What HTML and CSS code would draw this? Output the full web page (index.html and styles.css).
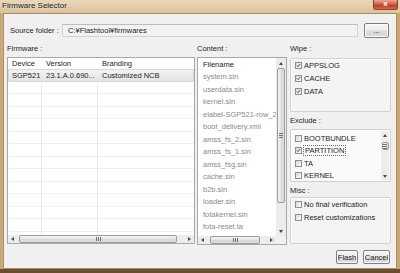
FILE: index.html
```html
<!DOCTYPE html>
<html lang="en">
<head>
<meta charset="UTF-8">
<title>Firmware Selector</title>
<link rel="stylesheet" href="styles.css">
</head>
<body>

<div class="window">
  <div class="titlebar">
    <span class="title">Firmware Selector</span>
    <span class="close-btn">x</span>
  </div>

  <div class="client">
    <div class="source-row">
      <span class="source-label">Source folder :</span>
      <div class="path-field">C:¥Flashtool¥firmwares</div>
      <button class="btn browse-btn">...</button>
    </div>

    <div class="panes">
      <!-- firmware table -->
      <div class="pane">
        <div class="caption">Firmware :</div>
        <div class="fw-table">
          <div class="fw-head"><span class="c1">Device</span><span class="c2">Version</span><span class="c3">Branding</span></div>
          <div class="fw-body">
            <div class="fw-row selected"><span class="c1">SGP521</span><span class="c2">23.1.A.0.690...</span><span class="c3">Customized NCB</span></div>
            <div class="fw-row"><span class="c1"></span><span class="c2"></span><span class="c3"></span></div>
            <div class="fw-row"><span class="c1"></span><span class="c2"></span><span class="c3"></span></div>
            <div class="fw-row"><span class="c1"></span><span class="c2"></span><span class="c3"></span></div>
            <div class="fw-row"><span class="c1"></span><span class="c2"></span><span class="c3"></span></div>
            <div class="fw-row"><span class="c1"></span><span class="c2"></span><span class="c3"></span></div>
            <div class="fw-row"><span class="c1"></span><span class="c2"></span><span class="c3"></span></div>
            <div class="fw-row"><span class="c1"></span><span class="c2"></span><span class="c3"></span></div>
            <div class="fw-row"><span class="c1"></span><span class="c2"></span><span class="c3"></span></div>
            <div class="fw-row"><span class="c1"></span><span class="c2"></span><span class="c3"></span></div>
            <div class="fw-row"><span class="c1"></span><span class="c2"></span><span class="c3"></span></div>
            <div class="fw-row"><span class="c1"></span><span class="c2"></span><span class="c3"></span></div>
            <div class="fw-row"><span class="c1"></span><span class="c2"></span><span class="c3"></span></div>
            <div class="fw-row"><span class="c1"></span><span class="c2"></span><span class="c3"></span></div>
          </div>
          <div class="hscroll fw-hscroll">
            <span class="arr-box"><span class="arr arr-left"></span></span>
            <div class="thumb"><span class="grip"></span></div>
            <span class="arr-box"><span class="arr arr-right"></span></span>
          </div>
        </div>
      </div>

      <!-- content list -->
      <div class="pane">
        <div class="caption">Content :</div>
        <div class="content-list">
          <div class="file-list">
            <div class="file-head">Filename</div>
            <div class="file-item">system.sin</div>
            <div class="file-item">userdata.sin</div>
            <div class="file-item">kernel.sin</div>
            <div class="file-item">elabel-SGP521-row_2.14.1.A.0.47.sin</div>
            <div class="file-item">boot_delivery.xml</div>
            <div class="file-item">amss_fs_2.sin</div>
            <div class="file-item">amss_fs_1.sin</div>
            <div class="file-item">amss_fsg.sin</div>
            <div class="file-item">cache.sin</div>
            <div class="file-item">b2b.sin</div>
            <div class="file-item">loader.sin</div>
            <div class="file-item">fotakernel.sin</div>
            <div class="file-item">fota-reset.ta</div>
          </div>
          <div class="vscroll">
            <span class="varr-box"><span class="arr arr-up"></span></span>
            <div class="vthumb"><span class="vgrip"></span></div>
            <span class="spacer"></span>
            <span class="varr-box"><span class="arr arr-down"></span></span>
          </div>
          <div class="hscroll content-hscroll">
            <span class="arr-box"><span class="arr arr-left"></span></span>
            <div class="thumb"><span class="grip"></span></div>
            <span class="spacer"></span>
            <span class="arr-box"><span class="arr arr-right"></span></span>
          </div>
          <div class="corner"></div>
        </div>
      </div>

      <!-- options -->
      <div class="pane side">
        <div class="caption">Wipe :</div>
        <div class="group wipe-group">
          <div class="check-row"><span class="cb"><svg viewBox="0 0 7 7"><path d="M1.3 3.4 L2.9 5.2 L5.8 1.4" /></svg></span>APPSLOG</div>
          <div class="check-row"><span class="cb"><svg viewBox="0 0 7 7"><path d="M1.3 3.4 L2.9 5.2 L5.8 1.4" /></svg></span>CACHE</div>
          <div class="check-row"><span class="cb"><svg viewBox="0 0 7 7"><path d="M1.3 3.4 L2.9 5.2 L5.8 1.4" /></svg></span>DATA</div>
        </div>

        <div class="caption caption-spaced">Exclude :</div>
        <div class="group exclude-group">
          <div class="ex-list">
            <div class="check-row ex-row"><span class="cb"></span>BOOTBUNDLE</div>
            <div class="check-row ex-row"><span class="cb"><svg viewBox="0 0 7 7"><path d="M1.3 3.4 L2.9 5.2 L5.8 1.4" /></svg></span><span class="focus">PARTITION</span></div>
            <div class="check-row ex-row"><span class="cb"></span>TA</div>
            <div class="check-row ex-row"><span class="cb"></span>KERNEL</div>
          </div>
          <div class="ex-scroll">
            <span class="small-arr"><span class="arr arr-up"></span></span>
            <div class="ex-thumb"><span class="vgrip"></span></div>
            <span class="spacer"></span>
            <span class="small-arr"><span class="arr arr-down"></span></span>
          </div>
        </div>

        <div class="caption caption-misc">Misc :</div>
        <div class="group misc-group">
          <div class="check-row"><span class="cb"></span>No final verification</div>
          <div class="check-row"><span class="cb"></span>Reset customizations</div>
        </div>

        <div class="button-row">
          <button class="btn flash-btn">Flash</button>
          <button class="btn cancel-btn">Cancel</button>
        </div>
      </div>
    </div>
  </div>
</div>

</body>
</html>
```

FILE: styles.css
```css
* { box-sizing: border-box; }
html, body { margin: 0; padding: 0; }
body { font-family: "Liberation Sans", Arial, sans-serif; font-size: 7.5px; color: #1e1e1e; background: #5a4228; }

.window {
  width: 400px; height: 273px;
  display: flex; flex-direction: column;
  padding: 0 3px;
  background: linear-gradient(90deg, #caa66e 0%, #d9bd90 2%, #dcc29a 50%, #d4b586 98%, #c9a46c 100%);
  border-bottom: 4px solid #6a4e2e;
}

/* title bar */
.titlebar { height: 13px; margin: 0 -3px; display: flex; justify-content: space-between; align-items: flex-start;
  background: linear-gradient(#e9d8ba, #dcc29a); }
.title { padding-left: 2px; line-height: 11px; font-size: 8px; color: #1a1a1a; text-shadow: 0 0 3px #f6ecd9; }
.close-btn {
  width: 25px; height: 10px; margin-right: 2px;
  background: linear-gradient(#eaa792 0%, #d4604a 45%, #c23d28 60%, #d5684f 100%);
  border: 1px solid #8a4030; border-top: 0; border-radius: 0 0 3px 3px;
  color: #fff; font-weight: bold; font-size: 8px; line-height: 8px; text-align: center;
}

.client { flex: 1; background: #f0f0f0; border: 1px solid #a48e6c; }

/* source folder row */
.source-row { display: flex; align-items: center; height: 15px; margin-top: 9px; padding-left: 6px; }
.source-label { width: 52px; flex: none; white-space: nowrap; }
.path-field { width: 296px; height: 13px; padding-left: 5px; line-height: 11px;
  border: 1px solid #d2d2d2; border-top-color: #bcbcbc; background: #f2f2f2; }
.browse-btn { width: 25px; height: 15px; margin-left: 6px; }

.btn {
  font: inherit; color: #1a1a1a; padding: 0;
  border: 1px solid #7e7e7e; border-radius: 2px;
  background: linear-gradient(#f7f7f7 0%, #ececec 48%, #dcdcdc 52%, #d6d6d6 100%);
  box-shadow: inset 0 0 0 1px #fbfbfb;
}

/* columns */
.panes { display: grid; grid-template-columns: 188px 90px 102px; column-gap: 2px; margin: 6px 0 0 3px; }
.side { margin-left: 1px; }
.caption { height: 13px; line-height: 9px; white-space: nowrap; }
.caption-spaced { height: 17px; padding-top: 4px; }
.caption-misc { height: 15px; padding-top: 4px; }

/* firmware table */
.fw-table { height: 187px; border: 1px solid #a9a9a9; background: #fff; display: flex; flex-direction: column; }
.fw-head { height: 11px; line-height: 11px; display: flex; flex: none; }
.fw-body { flex: 1; overflow: hidden; }
.fw-row { height: 12.5px; line-height: 11px; display: flex; border-bottom: 1px solid #efefef; }
.c1, .c2, .c3 { padding-left: 4px; white-space: nowrap; overflow: hidden; }
.c1 { width: 34px; flex: none; }
.c2 { width: 56px; flex: none; }
.c3 { flex: 1; }
.fw-row .c1, .fw-row .c2 { border-right: 1px solid #ebebeb; }
.fw-row.selected { background: linear-gradient(#f3f3f3, #e3e3e3); border: 1px solid #d8d8d8; }
.fw-row.selected .c1 { width: 33px; padding-left: 3px; }
.fw-row.selected span { border-right: 0; }

/* scrollbars */
.hscroll { height: 8px; flex: none; display: flex; align-items: center; background: #ececec; }
.arr-box { width: 9px; height: 8px; flex: none; display: flex; align-items: center; justify-content: center; }
.arr { width: 0; height: 0; border: 2px solid transparent; }
.arr-left { border-right: 3px solid #4a4a4a; border-left-width: 0; }
.arr-right { border-left: 3px solid #4a4a4a; border-right-width: 0; }
.arr-up { border-bottom: 3px solid #4a4a4a; border-top-width: 0; }
.arr-down { border-top: 3px solid #4a4a4a; border-bottom-width: 0; }
.thumb { height: 8px; border: 1px solid #9c9c9c; border-radius: 2px;
  background: linear-gradient(#f5f5f5, #e4e4e4 50%, #d8d8d8 51%, #dedede);
  display: flex; align-items: center; justify-content: center; }
.grip { width: 5px; height: 4px; background: repeating-linear-gradient(90deg, #707070 0 1px, transparent 1px 2px); }
.fw-hscroll .thumb { width: 158px; margin-left: 2px; margin-right: auto; }
.content-hscroll .thumb { width: 50px; margin-left: 3px; }
.spacer { flex: 1; }

/* content list */
.content-list { height: 188px; border: 1px solid #a9a9a9; background: #fff;
  display: grid; grid-template-columns: 78px 10px; grid-template-rows: 178px 8px; }
.file-list { overflow: hidden; }
.file-head { height: 13px; line-height: 13px; padding-left: 5px; color: #1a1a1a; }
.file-item { height: 12.5px; line-height: 12.5px; padding-left: 5px; color: #8a8a8a; white-space: nowrap; overflow: hidden; }
.vscroll { display: flex; flex-direction: column; align-items: center; background: #ececec; }
.varr-box { width: 10px; height: 10px; flex: none; display: flex; align-items: center; justify-content: center; }
.vthumb { width: 8px; height: 135px; border: 1px solid #9c9c9c; border-radius: 2px;
  background: linear-gradient(90deg, #f5f5f5, #e4e4e4 50%, #d8d8d8 51%, #dedede);
  display: flex; align-items: center; justify-content: center; }
.vgrip { width: 4px; height: 5px; background: repeating-linear-gradient(#707070 0 1px, transparent 1px 2px); }
.corner { background: #f0f0f0; }

/* option groups */
.group { border: 1px solid #d0d0d0; border-radius: 2px; background: #f4f4f4; box-shadow: inset 1px 1px 0 #fff; }
.wipe-group { height: 54px; margin-top: 1px; }
.exclude-group { height: 53px; display: flex; overflow: hidden; background: #fafafa; }
.misc-group { height: 47px; }
.check-row { height: 13px; display: flex; align-items: center; padding-left: 4px; white-space: nowrap; }
.ex-list { flex: 1; padding-top: 2px; overflow: hidden; }
.ex-row { height: 12.5px; }
.cb { width: 7px; height: 7px; flex: none; margin-right: 2px; border: 1px solid #8e8f8f;
  background: linear-gradient(135deg, #d8d8d8, #fbfbfb); }
.cb svg { display: block; width: 5px; height: 5px; }
.cb path { fill: none; stroke: #34508c; stroke-width: 1.3; }
.focus { outline: 1px dotted #6a6a6a; padding: 0 1px; }
.ex-scroll { width: 8px; margin: 1px 1px 1px 0; display: flex; flex-direction: column; align-items: center; background: #ececec; }
.small-arr { width: 8px; height: 8px; flex: none; display: flex; align-items: center; justify-content: center; }
.ex-thumb { width: 7px; height: 8px; margin-top: 3px; border: 1px solid #9c9c9c; border-radius: 2px;
  background: linear-gradient(90deg, #f5f5f5, #dedede); display: flex; align-items: center; justify-content: center; }

.button-row { display: flex; justify-content: flex-end; gap: 5px; margin-top: 6px; padding-right: 1px; }
.flash-btn { width: 22px; height: 14px; }
.cancel-btn { width: 27px; height: 14px; }
```
